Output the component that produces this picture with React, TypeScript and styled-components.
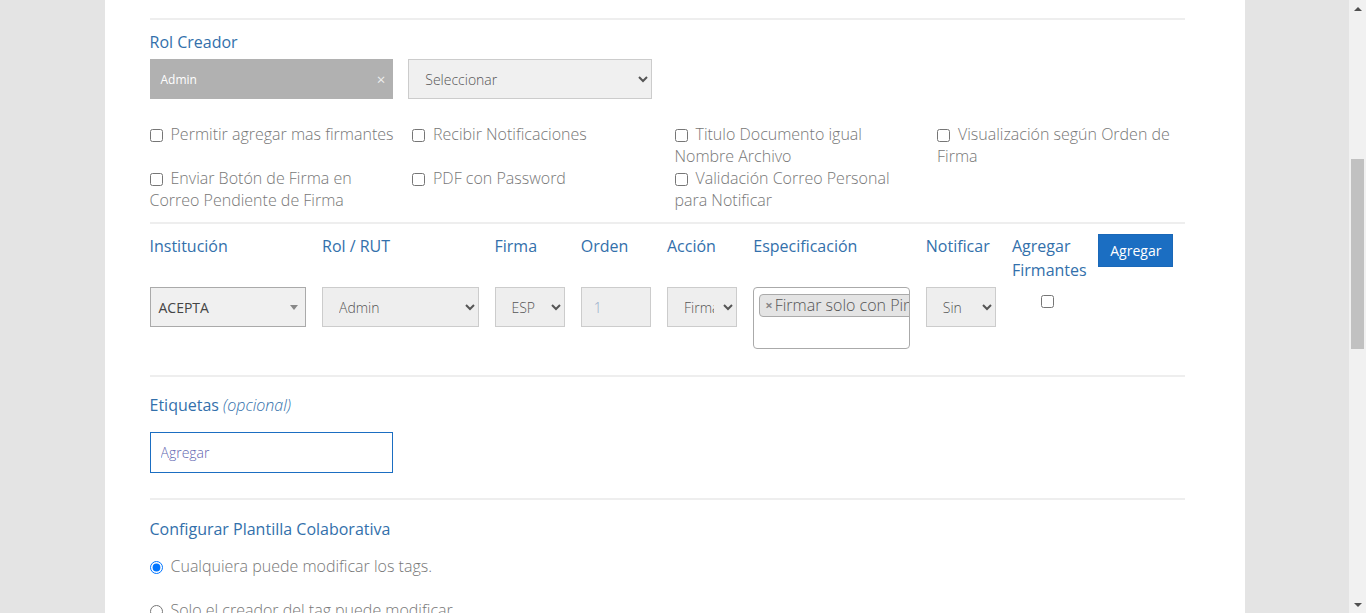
import React, { useLayoutEffect, useRef, useState } from "react";
import styled, { createGlobalStyle } from "styled-components";

const GlobalStyle = createGlobalStyle`
  html, body { margin: 0; padding: 0; height: 100%; overflow: hidden; }
  body {
    background: #e4e4e4;
    font-family: "Open Sans", "Liberation Sans", sans-serif;
    font-weight: 300;
    color: #777;
  }
  #root { height: 100%; }
  *, *::before, *::after { box-sizing: border-box; }
`;

const BLUE = "#3370ab";

/* ---------- window shell with a drawn scrollbar ---------- */

const Shell = styled.div`
  display: flex;
  height: 100%;
`;

const Viewport = styled.div`
  flex: 1;
  min-width: 0;
  overflow-y: auto;
  scrollbar-width: none;
  &::-webkit-scrollbar { display: none; }
`;

const ScrollRail = styled.div`
  flex: none;
  width: 17px;
  background: #f1f1f1;
  display: flex;
  flex-direction: column;
`;

const RailButton = styled.div`
  flex: none;
  height: 17px;
  display: flex;
  align-items: center;
  justify-content: center;
`;

const ArrowUp = styled.span`
  width: 0;
  height: 0;
  border-left: 4px solid transparent;
  border-right: 4px solid transparent;
  border-bottom: 4px solid #505050;
`;

const ArrowDown = styled.span`
  width: 0;
  height: 0;
  border-left: 4px solid transparent;
  border-right: 4px solid transparent;
  border-top: 4px solid #505050;
`;

const RailTrack = styled.div`
  flex: 1;
  padding: 0 2px;
  overflow: hidden;
`;

const RailThumb = styled.div`
  width: 13px;
  background: #c1c1c1;
`;

/* ---------- page ---------- */

const Page = styled.main`
  width: 1140px;
  min-height: 1868px;
  margin: 0 auto;
  background: #fff;
  padding: 30px 60px 40px 45px;
`;

const PageTitle = styled.h1`
  margin: 0 0 18px;
  font-size: 24px;
  line-height: 32px;
  font-weight: 400;
  color: ${BLUE};
`;

const FieldGroup = styled.div`
  margin-bottom: 19px;
`;

const Label = styled.div<{ $mt?: number; $lh?: number }>`
  margin-top: ${(p) => p.$mt ?? 0}px;
  font-size: 16px;
  font-weight: 400;
  line-height: ${(p) => p.$lh ?? 24}px;
  color: ${BLUE};
`;

const Em = styled.em`
  font-style: italic;
  font-weight: 300;
`;

const TextInput = styled.input`
  display: block;
  margin-top: 6px;
  width: 500px;
  height: 40px;
  border: 1px solid #ccc;
  background: #fff;
  padding: 0 10px;
  font-family: inherit;
  font-size: 14px;
  color: #555;
`;

const TextArea = styled.textarea`
  display: block;
  margin-top: 6px;
  width: 500px;
  height: 80px;
  border: 1px solid #ccc;
  padding: 8px 10px;
  font-family: inherit;
  font-size: 14px;
  resize: none;
`;

const Divider = styled.hr<{ $mt?: number }>`
  margin: ${(p) => p.$mt ?? 0}px 0 0;
  border: 0;
  border-top: 2px solid #eee;
  height: 0;
  width: 100%;
`;

const Grid12 = styled.div<{ $mt?: number }>`
  display: grid;
  grid-template-columns: repeat(12, 1fr);
  align-items: start;
  margin-top: ${(p) => p.$mt ?? 0}px;
`;

const Cell = styled.div<{ $span: number; $center?: boolean }>`
  grid-column: span ${(p) => p.$span};
  padding-right: 16px;
  min-width: 0;
  text-align: ${(p) => (p.$center ? "center" : "left")};
`;

const HeadLabel = styled.div`
  font-size: 16px;
  font-weight: 400;
  line-height: 24px;
  color: ${BLUE};
`;

const ChipBox = styled.div`
  height: 40px;
  background: #b1b1b1;
  color: #fff;
  display: flex;
  align-items: center;
  justify-content: space-between;
  padding: 0 8px 0 11px;
  font-size: 12px;
  font-weight: 400;
`;

const ChipClose = styled.span`
  font-size: 15px;
  color: #eee;
`;

const Select = styled.select<{ $bg?: string }>`
  display: block;
  width: 100%;
  height: 40px;
  background: ${(p) => p.$bg ?? "#eee"};
  border: 1px solid #ccc;
  border-radius: 0;
  color: #555;
  font-family: inherit;
  font-weight: 300;
  font-size: 14px;
  padding: 0 6px 0 12px;
`;

const ComboBox = styled.div`
  height: 40px;
  border: 1px solid #aaa;
  background: #f0f0f0;
  display: flex;
  align-items: center;
  justify-content: space-between;
  padding: 0 7px 0 8px;
  font-size: 14px;
  font-weight: 400;
  color: #444;
`;

const ComboArrow = styled.span`
  width: 0;
  height: 0;
  border-left: 4px solid transparent;
  border-right: 4px solid transparent;
  border-top: 5px solid #888;
`;

const OrderInput = styled.input`
  display: block;
  width: 100%;
  height: 40px;
  background: #eee;
  border: 1px solid #ccc;
  padding: 0 12px;
  font-family: inherit;
  font-weight: 300;
  font-size: 14px;
  color: #555;
  &::placeholder { color: #94a8c8; }
`;

const MultiBox = styled.div`
  height: 62px;
  border: 1px solid #aaa;
  border-radius: 4px;
  background: #fff;
  padding: 5px;
  overflow: hidden;
  white-space: nowrap;
`;

const MultiTag = styled.span`
  display: inline-flex;
  align-items: center;
  height: 23px;
  padding: 0 5px;
  background: #e4e4e4;
  border: 1px solid #aaa;
  border-radius: 4px;
  font-size: 16px;
  color: #555;
`;

const TagX = styled.span`
  font-size: 13px;
  font-weight: 700;
  color: #888;
  margin-right: 2px;
`;

const Check = styled.input`
  margin: 0 8px 0 0;
  width: 13px;
  height: 13px;
  vertical-align: -2px;
`;

const CenterCheck = styled.input`
  margin: 8px 0 0;
  width: 13px;
  height: 13px;
`;

const PrimaryButton = styled.button`
  background: #1b6ec2;
  color: #fff;
  border: 1px solid #1a68b8;
  border-radius: 0;
  font-family: inherit;
  font-weight: 400;
  font-size: 14px;
  line-height: 19px;
  padding: 6px 11px;
  cursor: pointer;
`;

const SecondaryButton = styled(PrimaryButton)`
  background: #fff;
  color: #555;
  border-color: #ccc;
  margin-left: 10px;
`;

const RolRow = styled.div`
  display: grid;
  grid-template-columns: repeat(4, 258.75px);
  margin-top: 6px;
`;

const RolCell = styled.div`
  padding-right: 15px;
`;

const CheckGrid = styled.div`
  display: grid;
  grid-template-columns: repeat(4, 262.5px);
  margin-top: 24px;
  margin-right: -15px;
`;

const CheckItem = styled.label`
  padding-right: 16px;
  font-size: 16px;
  line-height: 22px;
  color: #777;
`;

const TagInput = styled.input`
  display: block;
  margin-top: 15px;
  width: 243px;
  height: 41px;
  border: 1px solid #1b6ec2;
  padding: 0 10px;
  font-family: inherit;
  font-weight: 300;
  font-size: 14px;
  color: #555;
  &::placeholder { color: #5f66b0; }
`;

const RadioItem = styled.label<{ $mt: number }>`
  display: block;
  margin-top: ${(p) => p.$mt}px;
  font-size: 16px;
  line-height: 24px;
  color: #777;
`;

const Radio = styled.input`
  margin: 0 8px 0 0;
  width: 13px;
  height: 13px;
  vertical-align: -2px;
`;

const Note = styled.p`
  margin: 12px 0 0;
  font-size: 14px;
  color: #888;
`;

const Actions = styled.div`
  display: flex;
  margin-top: 30px;
`;

const options = [
  "Permitir agregar mas firmantes",
  "Recibir Notificaciones",
  "Titulo Documento igual Nombre Archivo",
  "Visualización según Orden de Firma",
  "Enviar Botón de Firma en Correo Pendiente de Firma",
  "PDF con Password",
  "Validación Correo Personal para Notificar",
];

export default function App() {
  const viewport = useRef<HTMLDivElement>(null);
  const anchor = useRef<HTMLHRElement>(null);
  const [thumb, setThumb] = useState({ top: 0, height: 0 });

  const measure = () => {
    const v = viewport.current;
    if (!v) return;
    const track = v.clientHeight - 34;
    setThumb({
      top: (track * v.scrollTop) / v.scrollHeight,
      height: (track * v.clientHeight) / v.scrollHeight,
    });
  };

  useLayoutEffect(() => {
    const v = viewport.current;
    const a = anchor.current;
    if (!v || !a) return;
    const offset =
      a.getBoundingClientRect().top - v.getBoundingClientRect().top + v.scrollTop;
    v.scrollTop = offset - 18;
    measure();
  }, []);

  return (
    <>
      <GlobalStyle />
      <Shell>
        <Viewport ref={viewport} onScroll={measure}>
          <Page>
            <PageTitle>Nueva Plantilla</PageTitle>
            <FieldGroup>
              <Label>Nombre Plantilla</Label>
              <TextInput placeholder="Nombre" />
            </FieldGroup>
            <FieldGroup>
              <Label>Descripción</Label>
              <TextArea placeholder="Descripción" />
            </FieldGroup>
            <FieldGroup>
              <Label>Tipo de Documento</Label>
              <TextInput placeholder="Seleccionar" />
            </FieldGroup>
            <FieldGroup>
              <Label>Documento</Label>
              <TextInput placeholder="Archivo PDF" />
            </FieldGroup>

            <Divider ref={anchor} />
            <Label $mt={11} $lh={22}>Rol Creador</Label>
            <RolRow>
              <RolCell>
                <ChipBox>
                  <span>Admin</span>
                  <ChipClose>×</ChipClose>
                </ChipBox>
              </RolCell>
              <RolCell>
                <Select $bg="#f0f0f0" defaultValue="">
                  <option value="">Seleccionar</option>
                  <option>Admin</option>
                </Select>
              </RolCell>
            </RolRow>
            <CheckGrid>
              {options.map((o) => (
                <CheckItem key={o}>
                  <Check type="checkbox" />
                  {o}
                </CheckItem>
              ))}
            </CheckGrid>

            <Divider $mt={11} />
            <Grid12 $mt={10}>
              <Cell $span={2}><HeadLabel>Institución</HeadLabel></Cell>
              <Cell $span={2}><HeadLabel>Rol / RUT</HeadLabel></Cell>
              <Cell $span={1}><HeadLabel>Firma</HeadLabel></Cell>
              <Cell $span={1}><HeadLabel>Orden</HeadLabel></Cell>
              <Cell $span={1}><HeadLabel>Acción</HeadLabel></Cell>
              <Cell $span={2}><HeadLabel>Especificación</HeadLabel></Cell>
              <Cell $span={1}><HeadLabel>Notificar</HeadLabel></Cell>
              <Cell $span={1}><HeadLabel>Agregar Firmantes</HeadLabel></Cell>
              <Cell $span={1}><PrimaryButton>Agregar</PrimaryButton></Cell>
            </Grid12>
            <Grid12 $mt={5}>
              <Cell $span={2}>
                <ComboBox>
                  <span>ACEPTA</span>
                  <ComboArrow />
                </ComboBox>
              </Cell>
              <Cell $span={2}>
                <Select defaultValue="Admin">
                  <option>Admin</option>
                </Select>
              </Cell>
              <Cell $span={1}>
                <Select defaultValue="ESP">
                  <option>ESP</option>
                </Select>
              </Cell>
              <Cell $span={1}>
                <OrderInput placeholder="1" />
              </Cell>
              <Cell $span={1}>
                <Select defaultValue="Firmar">
                  <option>Firmar</option>
                </Select>
              </Cell>
              <Cell $span={2}>
                <MultiBox>
                  <MultiTag>
                    <TagX>×</TagX>Firmar solo con Pin
                  </MultiTag>
                </MultiBox>
              </Cell>
              <Cell $span={1}>
                <Select defaultValue="Sin">
                  <option>Sin</option>
                </Select>
              </Cell>
              <Cell $span={1} $center>
                <CenterCheck type="checkbox" />
              </Cell>
              <Cell $span={1} />
            </Grid12>

            <Divider $mt={26} />
            <Label $mt={16}>
              Etiquetas <Em>(opcional)</Em>
            </Label>
            <TagInput placeholder="Agregar" />

            <Divider $mt={25} />
            <Label $mt={17}>Configurar Plantilla Colaborativa</Label>
            <RadioItem $mt={13}>
              <Radio type="radio" name="colab" defaultChecked />
              Cualquiera puede modificar los tags.
            </RadioItem>
            <RadioItem $mt={20}>
              <Radio type="radio" name="colab" />
              Solo el creador del tag puede modificar.
            </RadioItem>

            <Divider $mt={25} />
            <Label $mt={17}>Firmantes agregados</Label>
            <Note>No hay firmantes agregados.</Note>
            <Actions>
              <PrimaryButton>Guardar</PrimaryButton>
              <SecondaryButton>Cancelar</SecondaryButton>
            </Actions>
          </Page>
        </Viewport>
        <ScrollRail aria-hidden="true">
          <RailButton><ArrowUp /></RailButton>
          <RailTrack>
            <RailThumb style={{ marginTop: thumb.top, height: thumb.height }} />
          </RailTrack>
          <RailButton><ArrowDown /></RailButton>
        </ScrollRail>
      </Shell>
    </>
  );
}
